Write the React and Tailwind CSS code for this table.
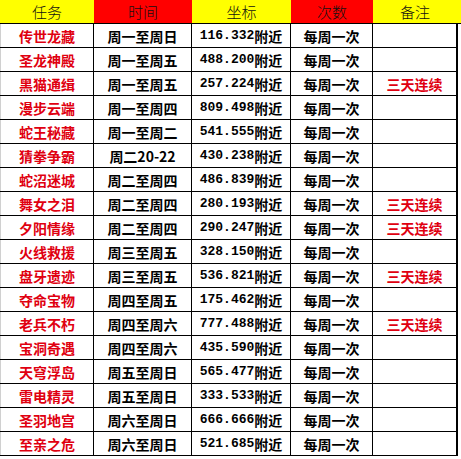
const rows = [
  ["传世龙藏", "周一至周日", "116.332", ""],
  ["圣龙神殿", "周一至周五", "488.200", ""],
  ["黑猫通缉", "周一至周五", "257.224", "三天连续"],
  ["漫步云端", "周一至周四", "809.498", ""],
  ["蛇王秘藏", "周一至周二", "541.555", ""],
  ["猜拳争霸", "周二20-22", "430.238", ""],
  ["蛇沼迷城", "周二至周四", "486.839", ""],
  ["舞女之泪", "周二至周四", "280.193", "三天连续"],
  ["夕阳情缘", "周二至周四", "290.247", "三天连续"],
  ["火线救援", "周三至周五", "328.150", ""],
  ["盘牙遗迹", "周三至周五", "536.821", "三天连续"],
  ["夺命宝物", "周四至周五", "175.462", ""],
  ["老兵不朽", "周四至周六", "777.488", "三天连续"],
  ["宝洞奇遇", "周四至周六", "435.590", ""],
  ["天穹浮岛", "周五至周日", "565.477", ""],
  ["雷电精灵", "周五至周日", "333.533", ""],
  ["圣羽地宫", "周六至周日", "666.666", ""],
  ["至亲之危", "周六至周日", "521.685", ""],
];

const cjk = { fontFamily: '"Noto Sans CJK SC", sans-serif' };
const mono = { fontFamily: '"Liberation Mono", "Noto Sans CJK SC", monospace' };

export default function App() {
  return (
    <div className="w-[461px] h-[459px] bg-white overflow-hidden" style={cjk}>
      <div className="flex h-[24px] border-b border-black text-[15px] leading-none font-light text-[#111]">
        <div className="w-[94px] bg-[#ffff00] flex items-center justify-center">任务</div>
        <div className="w-[98px] bg-[#ff0000] flex items-center justify-center">时间</div>
        <div className="w-[99px] bg-[#ffff00] flex items-center justify-center">坐标</div>
        <div className="w-[82px] bg-[#ff0000] flex items-center justify-center">次数</div>
        <div className="flex-1 bg-[#ffff00] flex items-center justify-center pr-[4px]">备注</div>
      </div>
      <div className="w-[458px]">
        {rows.map((r, i) => (
          <div key={i} className="flex h-[24px] border-b border-black font-bold text-[14px] leading-none">
            <div className="w-[94px] border-r border-black border-l border-l-[#d0d0d0] flex items-center justify-center text-[#e00010]">{r[0]}</div>
            <div className="w-[98px] border-r border-black flex items-center justify-center text-black">{r[1]}</div>
            <div className="w-[99px] border-r border-black flex items-center justify-center text-black text-[13px]" style={mono}>
              {r[2]}<span className="text-[14px]" style={cjk}>附近</span>
            </div>
            <div className="w-[82px] border-r border-black flex items-center justify-center text-black">每周一次</div>
            <div className="flex-1 border-r-2 border-black flex items-center justify-center text-[#e00010]">{r[3]}</div>
          </div>
        ))}
      </div>
    </div>
  );
}
